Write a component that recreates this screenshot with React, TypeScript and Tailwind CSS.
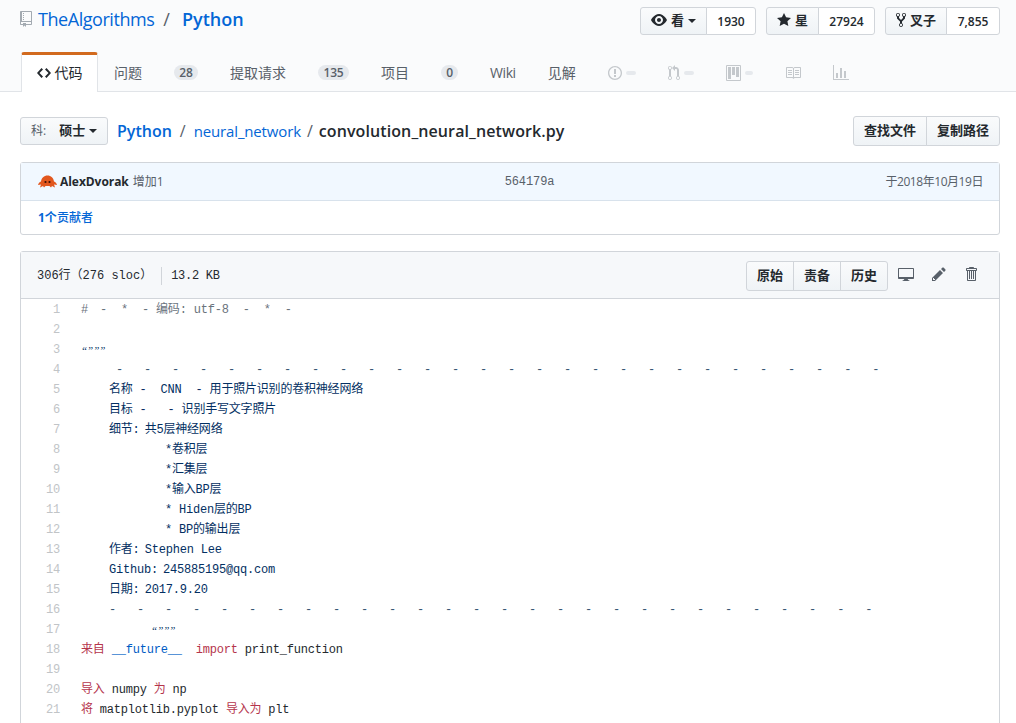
import React from 'react';

const sans = 'font-["Open_Sans","Noto_Sans_CJK_SC",sans-serif]';

type IconProps = { w: number; vb: string; d: string; className?: string };

const Icon: React.FC<IconProps> = ({ w, vb, d, className }) => (
  <svg width={w} height={16} viewBox={vb} fill="currentColor" className={className}>
    <path fillRule="evenodd" d={d} />
  </svg>
);

const paths = {
  repo: 'M4 9H3V8h1v1zm0-3H3v1h1V6zm0-2H3v1h1V4zm0-2H3v1h1V2zm8-1v12c0 .55-.45 1-1 1H6v2l-1.5-1.5L3 16v-2H1c-.55 0-1-.45-1-1V1c0-.55.45-1 1-1h10c.55 0 1 .45 1 1zm-1 10H1v2h2v-1h3v1h5v-2zm0-10H2v9h9V1z',
  code: 'M9.5 3L8 4.5 11.5 8 8 11.5 9.5 13 14 8 9.5 3zm-5 0L0 8l4.5 5L6 11.5 2.5 8 6 4.5 4.5 3z',
  eye: 'M8.06 2C3 2 0 8 0 8s3 6 8.06 6C13 14 16 8 16 8s-3-6-7.94-6zM8 12c-2.2 0-4-1.78-4-4 0-2.2 1.8-4 4-4 2.22 0 4 1.8 4 4 0 2.22-1.78 4-4 4zm2-4c0 1.11-.89 2-2 2-1.11 0-2-.89-2-2 0-1.11.89-2 2-2 1.11 0 2 .89 2 2z',
  star: 'M14 6l-4.9-.64L7 1 4.9 5.36 0 6l3.6 3.26L2.67 14 7 11.67 11.33 14l-.93-4.74L14 6z',
  fork: 'M8 1a1.993 1.993 0 0 0-1 3.72V6L5 8 3 6V4.72A1.993 1.993 0 0 0 2 1a1.993 1.993 0 0 0-1 3.72V6.5l3 3v1.78A1.993 1.993 0 0 0 5 15a1.993 1.993 0 0 0 1-3.72V9.5l3-3V4.72A1.993 1.993 0 0 0 8 1zM2 4.2C1.34 4.2.8 3.65.8 3c0-.65.55-1.2 1.2-1.2.65 0 1.2.55 1.2 1.2 0 .65-.55 1.2-1.2 1.2zm3 10c-.66 0-1.2-.55-1.2-1.2 0-.65.55-1.2 1.2-1.2.65 0 1.2.55 1.2 1.2 0 .65-.55 1.2-1.2 1.2zm3-10c-.66 0-1.2-.55-1.2-1.2 0-.65.55-1.2 1.2-1.2.65 0 1.2.55 1.2 1.2 0 .65-.55 1.2-1.2 1.2z',
  issue: 'M7 2.3c3.14 0 5.7 2.56 5.7 5.7s-2.56 5.7-5.7 5.7A5.71 5.71 0 0 1 1.3 8c0-3.14 2.56-5.7 5.7-5.7zM7 1C3.14 1 0 4.14 0 8s3.14 7 7 7 7-3.14 7-7-3.14-7-7-7zm1 3H6v5h2V4zm0 6H6v2h2v-2z',
  pr: 'M11 11.28V5c-.03-.78-.34-1.47-.94-2.06C9.46 2.35 8.78 2.03 8 2H7V0L4 3l3 3V4h1c.27.02.48.11.69.31.21.2.3.42.31.69v6.28A1.993 1.993 0 0 0 10 15a1.993 1.993 0 0 0 1-3.72zm-1 2.92c-.66 0-1.2-.55-1.2-1.2 0-.65.55-1.2 1.2-1.2.65 0 1.2.55 1.2 1.2 0 .65-.55 1.2-1.2 1.2zM4 3c0-1.11-.89-2-2-2a1.993 1.993 0 0 0-1 3.72v6.56A1.993 1.993 0 0 0 2 15a1.993 1.993 0 0 0 1-3.72V4.72c.59-.34 1-.98 1-1.72zm-.8 10c0 .66-.55 1.2-1.2 1.2-.65 0-1.2-.55-1.2-1.2 0-.65.55-1.2 1.2-1.2.65 0 1.2.55 1.2 1.2zM2 4.2C1.34 4.2.8 3.65.8 3c0-.65.55-1.2 1.2-1.2.65 0 1.2.55 1.2 1.2 0 .65-.55 1.2-1.2 1.2z',
  project: 'M10 12h3V2h-3v10zm-4-2h3V2H6v8zm-4 4h3V2H2v12zm-1 1h13V1H1v14zM14 0H1a1 1 0 0 0-1 1v14a1 1 0 0 0 1 1h13a1 1 0 0 0 1-1V1a1 1 0 0 0-1-1z',
  book: 'M3 5h4v1H3V5zm0 3h4V7H3v1zm0 2h4V9H3v1zm11-5h-4v1h4V5zm0 2h-4v1h4V7zm0 2h-4v1h4V9zm2-6v9c0 .55-.45 1-1 1H9.5l-1 1-1-1H2c-.55 0-1-.45-1-1V3c0-.55.45-1 1-1h5.5l1 1 1-1H15c.55 0 1 .45 1 1zm-8 .5L7.5 3H2v9h6V3.5zm7-.5H9.5l-.5.5V12h6V3z',
  graph: 'M16 14v1H0V0h1v14h15zM5 13H3V8h2v5zm4 0H7V3h2v10zm4 0h-2V6h2v7z',
  desktop: 'M15 2H1c-.55 0-1 .45-1 1v9c0 .55.45 1 1 1h5.34c-.25.61-.86 1.39-2.34 2h8c-1.48-.61-2.09-1.39-2.34-2H15c.55 0 1-.45 1-1V3c0-.55-.45-1-1-1zm0 9H1V3h14v8z',
  pencil: 'M0 12v3h3l8-8-3-3-8 8zm3 2H1v-2h1v1h1v1zm10.3-9.3L12 6 9 3l1.3-1.3a.996.996 0 0 1 1.41 0l1.59 1.59c.39.39.39 1.02 0 1.41z',
  trash: 'M11 2H9c0-.55-.45-1-1-1H5c-.55 0-1 .45-1 1H2c-.55 0-1 .45-1 1v1c0 .55.45 1 1 1v9c0 .55.45 1 1 1h7c.55 0 1-.45 1-1V5c.55 0 1-.45 1-1V3c0-.55-.45-1-1-1zm-1 12H3V5h1v8h1V5h1v8h1V5h1v8h1V5h1v9zm1-10H2V3h9v1z',
};

const Caret = () => <span className="inline-block border-x-4 border-t-4 border-x-transparent border-t-[#24292e]" />;

const btn = 'bg-gradient-to-b from-[#fafbfc] to-[#eff3f6] border border-[#d1d5da] flex items-center justify-center font-semibold text-[#24292e]';

const ActionPair = ({ label, count, w, cw }: { label: React.ReactNode; count: string; w: string; cw: string }) => (
  <div className="flex h-7 text-[13px]">
    <div className={`${btn} ${w} rounded-l-[3px] gap-1`}>{label}</div>
    <div className={`${cw} -ml-px pt-px bg-white border border-[#d1d5da] rounded-r-[3px] flex items-center justify-center font-semibold text-xs text-[#24292e]`}>
      {count}
    </div>
  </div>
);

const Counter = ({ n, w }: { n: string; w: string }) => (
  <span className={`${w} ml-8 h-[15px] rounded-full bg-[#e6e9ed] text-xs tracking-[-0.2px] font-semibold text-[#586069] flex items-center justify-center leading-none`}>{n}</span>
);

const Faded = ({ icon, w, vb, dash }: { icon: string; w: number; vb: string; dash?: string }) => (
  <span className="flex items-center gap-1 text-[#c4c8cc]">
    <Icon w={w} vb={vb} d={icon} />
    {dash && <span className={`${dash} h-1 bg-[#e6e9ed] rounded-sm`} />}
  </span>
);

const dashes = (n: number) => Array(n).fill('-').join('   ');

const S = ({ c, t }: { c: string; t: string }) => <span className={c}>{t}</span>;
const str = 'text-[#032f62]';
const rule = 'text-[#3a5673]';
const kw = 'text-[#b5354c]';
const txt = 'text-[#24292e]';
const quotes = `${str} text-[11px] font-["Liberation_Serif",serif] italic tracking-normal`;

// key: value lines, the colon is a bit narrower in the reference
const Kv = ({ k, v }: { k: string; v: string }) => (
  <span className={str}>
    {k}
    <span className="-ml-[2px]"> {v}</span>
  </span>
);

const lines: React.ReactNode[] = [
  <span className="text-[#6a737d]">
    #<span className="ml-[12px]">-  *  - 编码: utf-8  -  *  -</span>
  </span>,
  '',
  <span className={quotes}>“”””</span>,
  <S c={rule} t={`     ${dashes(28)}`} />,
  <S c={str} t="    名称 -  CNN  - 用于照片识别的卷积神经网络" />,
  <S c={str} t="    目标 -   - 识别手写文字照片" />,
  <Kv k="    细节:" v="共5层神经网络" />,
  <S c={str} t="            *卷积层" />,
  <S c={str} t="            *汇集层" />,
  <S c={str} t="            *输入BP层" />,
  <S c={str} t="            * Hiden层的BP" />,
  <S c={str} t="            * BP的输出层" />,
  <Kv k="    作者:" v="Stephen Lee" />,
  <Kv k="    Github:" v="245885195@qq.com" />,
  <Kv k="    日期:" v="2017.9.20" />,
  <S c={rule} t={`    ${dashes(28)}`} />,
  <>
    <span>{'          '}</span>
    <span className={quotes}>“”””</span>
  </>,
  <>
    <S c={kw} t="来自" /> <S c="text-[#005cc5]" t="__future__" />
    {'  '}
    <S c={kw} t="import" /> <S c={txt} t="print_function" />
  </>,
  '',
  <>
    <S c={kw} t="导入" /> <S c={txt} t="numpy" /> <S c={kw} t="为" /> <S c={txt} t="np" />
  </>,
  <>
    <S c={kw} t="将" /> <S c={txt} t="matplotlib.pyplot" /> <S c={kw} t="导入为" /> <S c={txt} t="plt" />
  </>,
];

const App: React.FC = () => {
  return (
    <div className={`w-[1016px] h-[723px] overflow-hidden bg-white ${sans} text-[#24292e]`}>
      {/* Repo head */}
      <header className="h-[92px] bg-[#fafbfc] border-b border-[#e1e4e8] flex flex-col">
        <div className="flex items-start justify-between pl-5 pr-4 pt-[7px] h-[52px]">
          <div className="flex items-center text-[18px] leading-[24px] text-[#0366d6]">
            <Icon w={12} vb="0 0 12 16" d={paths.repo} className="text-[#a3aab1] mr-1.5" />
            <span className="tracking-[-0.45px]">TheAlgorithms</span>
            <span className="ml-[9px] mr-3 text-[#586069]">/</span>
            <span className="font-semibold">Python</span>
          </div>
          <div className="flex gap-2.5">
            <ActionPair
              w="w-[67px]"
              cw="w-[50px]"
              count="1930"
              label={
                <>
                  <Icon w={16} vb="0 0 16 16" d={paths.eye} className="-mt-[3px]" />
                  <span>看</span>
                  <Caret />
                </>
              }
            />
            <ActionPair
              w="w-[53px]"
              cw="w-[57px]"
              count="27924"
              label={
                <>
                  <Icon w={14} vb="0 0 14 16" d={paths.star} className="-mt-[3px]" />
                  <span>星</span>
                </>
              }
            />
            <ActionPair
              w="w-[62px]"
              cw="w-[54px]"
              count="7,855"
              label={
                <>
                  <Icon w={10} vb="0 0 10 16" d={paths.fork} className="-mt-[3px]" />
                  <span>叉子</span>
                </>
              }
            />
          </div>
        </div>
        <nav className="flex items-center pl-[21px] h-10 text-sm text-[#586069]">
          <div className="h-[40px] w-[77px] bg-white border-x border-[#e1e4e8] border-t-[3px] border-t-[#d26a1e] rounded-t-[3px] flex items-center justify-center gap-1 text-[#24292e] mr-[16px] -mb-px">
            <Icon w={14} vb="0 0 14 16" d={paths.code} />
            <span>代码</span>
          </div>
          <div className="flex items-center pt-[3px]">
            <span>问题</span>
            <Counter n="28" w="w-6" />
            <span className="ml-8">提取请求</span>
            <Counter n="135" w="w-[31px]" />
            <span className="ml-8">项目</span>
            <Counter n="0" w="w-[17px]" />
            <span className="ml-8 tracking-[-0.4px]">Wiki</span>
            <span className="ml-8">见解</span>
            <div className="ml-8 flex gap-8">
              <Faded icon={paths.issue} w={14} vb="0 0 14 16" dash="w-2.5" />
              <Faded icon={paths.pr} w={12} vb="0 0 12 16" dash="w-2.5" />
              <Faded icon={paths.project} w={15} vb="0 0 15 16" dash="w-2" />
              <Faded icon={paths.book} w={16} vb="0 0 16 16" />
              <Faded icon={paths.graph} w={16} vb="0 0 16 16" />
            </div>
          </div>
        </nav>
      </header>

      <main className="pl-5 pr-4">
        {/* Breadcrumb */}
        <div className="flex items-center justify-between h-[30px] mt-6">
          <div className="flex items-center">
            <div className={`${btn} !justify-start pl-[10px] w-[88px] h-7 rounded-[3px] gap-1 text-[13px]`}>
              <span className="font-normal text-xs text-[#586069]">科:</span>
              <span className="ml-[9px]">硕士</span>
              <Caret />
            </div>
            <div className="ml-[9px] flex items-center text-base text-[#0366d6]">
              <span className="font-semibold">Python</span>
              <span className="mx-2 text-[#586069]">/</span>
              <span className="text-[15px] tracking-[-0.15px]">neural_network</span>
              <span className="mx-1.5 text-[#586069]">/</span>
              <span className="font-semibold tracking-[0.1px] text-[#24292e]">convolution_neural_network.py</span>
            </div>
          </div>
          <div className="flex h-[30px] text-[13px]">
            <div className={`${btn} w-[74px] rounded-l-[3px]`}>查找文件</div>
            <div className={`${btn} w-[74px] -ml-px rounded-r-[3px]`}>复制路径</div>
          </div>
        </div>

        {/* Commit tease */}
        <section className="mt-4 h-[73px] border border-[#d1d5da] rounded-[3px]">
          <div className="h-[38px] bg-[#f1f8ff] border-b border-[#d8e2ec] flex items-center pl-[17px] pr-4 text-xs">
            <svg width="19" height="13" viewBox="0 0 19 13" className="shrink-0">
              <path
                fill="#e2571e"
                d="M0 10c.5-2 1.500-3 3-3.500C3.500 3 6 .5 9.500.5S15.500 3 16 6.500c1.500.5 2.500 1.500 3 3.500-1 0-2-.5-3-.5l1 3-3-1.500-1 1.500-1.500-1.500h-4L6 12.500 5 11l-3 1.500 1-3c-1 0-2 .5-3 .5z"
              />
              <circle cx="7.500" cy="7" r="1.100" fill="#3a1206" />
              <circle cx="11.500" cy="7" r="1.100" fill="#3a1206" />
            </svg>
            <span className="ml-[3px] font-bold tracking-[-0.05px]">AlexDvorak</span>
            <span className="ml-1 text-[#586069]">增加1</span>
            <span className='ml-[341px] font-["Liberation_Mono",monospace] tracking-[-0.1px] text-[#586069]'>564179a</span>
            <span className="ml-auto tracking-[-0.45px] text-[#586069]">于2018年10月19日</span>
          </div>
          <div className="h-[33px] flex items-center pl-[17px] text-xs font-bold text-[#0366d6]">
            1个<span className="font-medium">贡献者</span>
          </div>
        </section>

        {/* File box, runs past the bottom of the window */}
        <section className="mt-4 min-h-[520px] border border-[#d1d5da] rounded-t-[3px]">
          <div className="h-[47px] bg-[#f6f8fa] border-b border-[#d1d5da] flex items-center pl-4 pr-[22px]">
            <div className='flex items-center font-["Liberation_Mono","Noto_Sans_CJK_SC",monospace] text-xs text-[#24292e] pt-px'>
              <span className="whitespace-pre">306行（276 sloc）</span>
              <span className="ml-[9px] h-[18px] border-l border-[#d1d5da]" />
              <span className="ml-[9px] tracking-[-0.3px]">13.2 KB</span>
            </div>
            <div className="ml-auto flex items-center">
              <div className="flex h-[30px] text-[13px] mt-0.5">
                <div className={`${btn} w-12 rounded-l-[3px]`}>原始</div>
                <div className={`${btn} w-12 -ml-px`}>责备</div>
                <div className={`${btn} w-12 -ml-px rounded-r-[3px]`}>历史</div>
              </div>
              <div className="ml-[10px] flex items-center gap-[18px] text-[#586069] -mt-0.5">
                <Icon w={16} vb="0 0 16 16" d={paths.desktop} />
                <Icon w={14} vb="0 0 14 16" d={paths.pencil} />
                <Icon w={12} vb="0 0 12 16" d={paths.trash} className="ml-[1px]" />
              </div>
            </div>
          </div>
          <div className='font-["Liberation_Mono","Noto_Sans_CJK_SC",monospace] text-xs tracking-[-0.2px] pt-px'>
            {lines.map((line, i) => (
              <div key={i} className="flex h-5 leading-5 whitespace-pre">
                <span className="w-[39px] text-right text-[#c1c4c7]">{i + 1}</span>
                <span className="ml-[21px]">{line}</span>
              </div>
            ))}
          </div>
        </section>
      </main>
    </div>
  );
};

export default App;
